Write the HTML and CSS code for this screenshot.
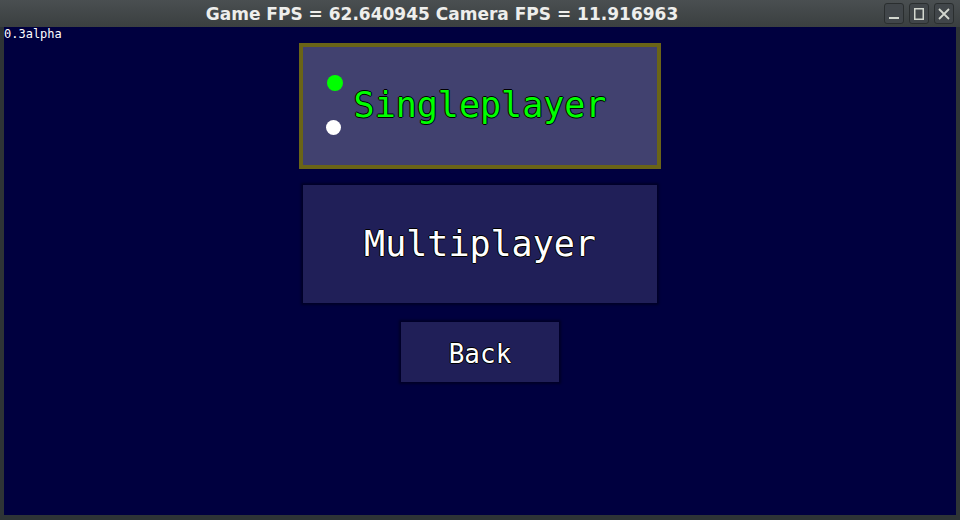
FILE: index.html
```html
<!DOCTYPE html>
<html>
<head>
<meta charset="utf-8">
<link rel="stylesheet" href="styles.css">
</head>
<body>
<div class="window">
  <div class="titlebar">
    <div class="title">Game FPS = 62.640945 Camera FPS = 11.916963</div>
    <div class="controls">
      <div class="ctl"><svg width="12" height="12" viewBox="0 0 12 12"><rect x="1" y="9" width="10" height="2" fill="#d3d7cf"/></svg></div>
      <div class="ctl"><svg width="12" height="14" viewBox="0 0 12 14"><rect x="1.75" y="1.75" width="8.5" height="10.5" fill="none" stroke="#d3d7cf" stroke-width="1.5"/></svg></div>
      <div class="ctl"><svg width="14" height="14" viewBox="0 0 14 14"><path d="M2 2 L12 12 M12 2 L2 12" stroke="#d3d7cf" stroke-width="1.8" fill="none"/></svg></div>
    </div>
  </div>
  <div class="content">
    <div class="version">0.3alpha</div>
    <div class="menu">
      <div class="btn big selected">
        <span class="dot dot-green"></span>
        <span class="dot dot-white"></span>
        <span class="label">Singleplayer</span>
      </div>
      <div class="btn big second"><span class="label">Multiplayer</span></div>
      <div class="btn small"><span class="label">Back</span></div>
    </div>
  </div>
</div>
</body>
</html>
```

FILE: styles.css
```css
html, body {
  margin: 0;
  padding: 0;
  background: #2e3436;
}
.window {
  width: 960px;
  height: 520px;
  display: flex;
  flex-direction: column;
  background: #2e3436;
  box-sizing: border-box;
  padding: 0 4px 5px 4px;
}
.titlebar {
  height: 27px;
  margin: 0 -4px;
  display: flex;
  align-items: center;
  background: linear-gradient(#4a4f51, #3a3f40);
}
.title {
  flex: 1;
  text-align: center;
  font-family: "DejaVu Sans", sans-serif;
  font-weight: bold;
  font-size: 17px;
  color: #eeeeec;
  padding-top: 1px;
}
.controls {
  width: 76px;
  display: flex;
  gap: 5px;
  align-self: flex-start;
  padding-top: 3px;
}
.ctl {
  width: 20px;
  height: 21px;
  box-sizing: border-box;
  border: 1px solid #2a2e2f;
  border-radius: 3px;
  background: #41464a;
  display: flex;
  align-items: center;
  justify-content: center;
}
.content {
  flex: 1;
  background: #00003f;
  display: flex;
  flex-direction: column;
}
.version {
  font-family: "DejaVu Sans Mono", monospace;
  font-size: 12px;
  line-height: 14px;
  color: #ffffff;
}
.menu {
  display: flex;
  flex-direction: column;
  align-items: center;
}
.btn {
  position: relative;
  box-sizing: border-box;
  display: flex;
  align-items: center;
  justify-content: center;
  font-family: "DejaVu Sans Mono", monospace;
  color: #ffffff;
  background: #201f58;
  box-shadow: 0 0 2px 2px rgba(0, 0, 20, 0.55);
}
.label {
  text-shadow: -1px 0 #000, 1px 0 #000, 0 -1px #000, 0 1px #000;
}
.big {
  width: 354px;
  height: 118px;
  font-size: 35px;
}
.selected {
  width: 362px;
  height: 126px;
  margin-top: 2px;
  padding-bottom: 2px;
  border: 4px solid #6a6417;
  background: #41416f;
  color: #00ff00;
  box-shadow: none;
}
.second {
  margin-top: 16px;
}
.small {
  width: 158px;
  height: 60px;
  font-size: 26px;
  margin-top: 19px;
  padding-top: 4px;
}
.dot {
  position: absolute;
  border-radius: 50%;
}
.dot-green {
  width: 16px;
  height: 16px;
  left: 24px;
  top: 28px;
  background: #00ff00;
}
.dot-white {
  width: 15px;
  height: 15px;
  left: 23px;
  top: 73px;
  background: #ffffff;
}
```
